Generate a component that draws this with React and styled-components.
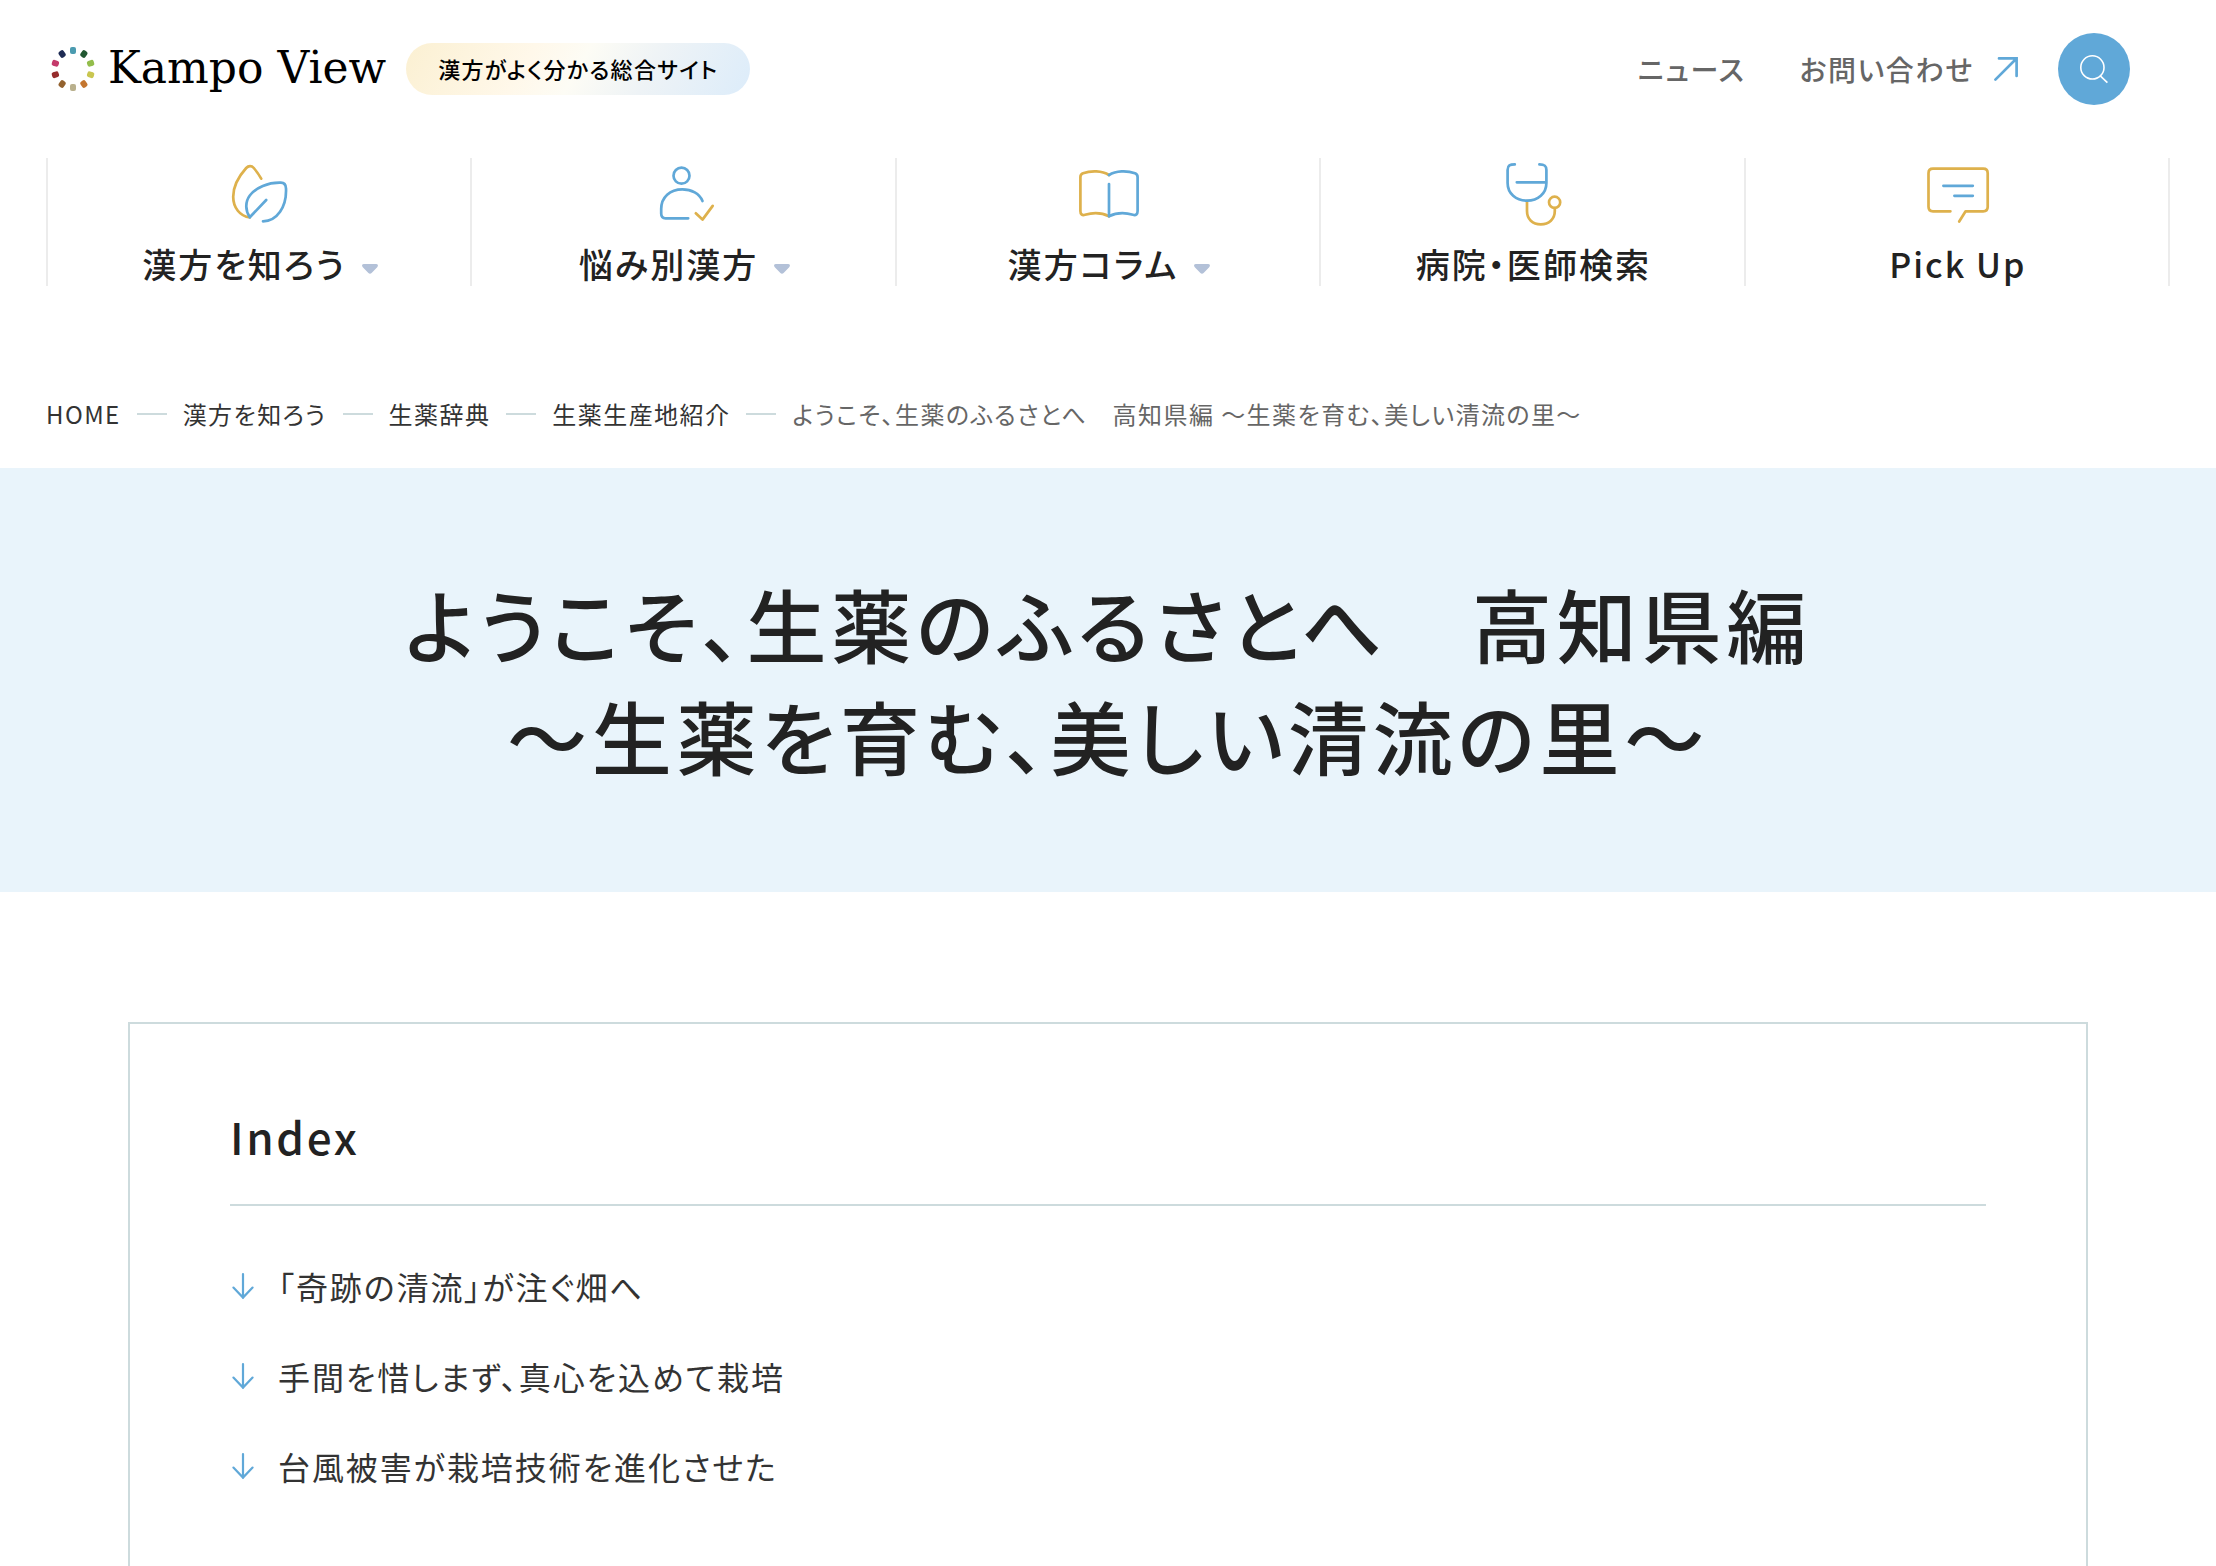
import React from 'react'
import styled, { createGlobalStyle } from 'styled-components';

const GlobalStyle = createGlobalStyle`
    * {
        box-sizing: border-box;
        letter-spacing: 0.06em;
    }
    body {
        margin: 0;
        background-color: #fff;
        color: #222;
        font-family: "Noto Sans CJK JP", "Noto Sans", sans-serif;
        font-weight: 500;
        font-feature-settings: "palt";
    }
    a {
        color: inherit;
        text-decoration: none;
    }
    h1, h2, ul, ol, p {
        margin: 0;
        padding: 0;
    }
    ul, ol {
        list-style: none;
    }
    svg {
        display: block;
        flex: none;
        overflow: visible;
    }
`;

const TopBar = styled.div`
    display: flex;
    align-items: center;
    justify-content: space-between;
    padding: 33px 86px 0 52px;
`;

const Brand = styled.div`
    display: flex;
    align-items: center;
    gap: 20px;
`;

const Logo = styled.a`
    display: flex;
    align-items: center;
    gap: 14px;
    color: #000;
    font-family: "DejaVu Serif", serif;
    font-size: 44px;
    font-weight: 400;
    line-height: 52px;

    span {
        padding-bottom: 2px;
        letter-spacing: normal;
    }
`;

const Tagline = styled.p`
    padding: 0 32px 2px;
    border-radius: 26px;
    background: linear-gradient(120deg, #fbf0d2 0%, #fff8ea 35%, #fdfcf5 50%, #eef3f6 70%, #dcecfa 100%);
    color: #000;
    font-size: 22px;
    line-height: 50px;
`;

const Tools = styled.div`
    display: flex;
    align-items: center;
    color: #666;
    font-size: 28px;
    line-height: 40px;
`;

const ToolLink = styled.a`
    display: flex;
    align-items: center;
    gap: 20px;
    margin-right: ${props => props.$external ? '40px' : '54px'};
`;

const SearchButton = styled.button`
    display: flex;
    align-items: center;
    justify-content: center;
    width: 72px;
    height: 72px;
    padding: 0;
    border: none;
    border-radius: 50%;
    background-color: #60a8d8;
    cursor: pointer;
`;

const MainNav = styled.ul`
    display: grid;
    grid-template-columns: repeat(5, 1fr);
    margin: 53px 46px 0;
    border-left: 2px solid #ececec;
`;

const NavItem = styled.li`
    border-right: 2px solid #ececec;
`;

const NavLink = styled.a`
    display: flex;
    flex-direction: column;
    align-items: center;
    gap: 17px;
    padding: 3px 0 1px 2px;
    font-size: 34px;
    line-height: 43px;
`;

const NavLabel = styled.span`
    display: flex;
    align-items: center;
    gap: 16px;

    svg {
        margin-top: 10px;
    }
`;

const Breadcrumb = styled.ol`
    display: flex;
    align-items: center;
    margin: 110px 46px 36px;
    font-size: 24px;
    font-weight: 400;
    line-height: 36px;
    color: #333;
`;

const Crumb = styled.li`
    display: flex;
    align-items: center;
    color: ${props => props.$current ? '#666' : 'inherit'};

    &:not(:first-child)::before {
        content: '';
        width: 30px;
        height: 2px;
        margin: 0 16px;
        background-color: #cddbdd;
    }
`;

const Hero = styled.section`
    padding: 98px 46px 102px;
    background-color: #e9f4fb;
    text-align: center;
`;

const Title = styled.h1`
    font-size: 80px;
    font-weight: 500;
    line-height: 112px;
`;

const IndexBox = styled.nav`
    max-width: 1960px;
    margin: 130px auto;
    padding: 80px 100px 100px;
    border: 2px solid #cddbdd;
`;

const IndexTitle = styled.h2`
    padding-bottom: 36px;
    border-bottom: 2px solid #cddbdd;
    font-size: 44px;
    font-weight: 500;
    line-height: 64px;
`;

const IndexList = styled.ul`
    display: flex;
    flex-direction: column;
    gap: 42px;
    padding-top: 56px;
`;

const IndexLink = styled.a`
    display: flex;
    align-items: center;
    gap: 22px;
    color: #333;
    font-size: 32px;
    font-weight: 400;
    line-height: 48px;
`;

const BLUE = '#60a8d8';
const GOLD = '#deb14c';

const petals = ['#4b9bb0', '#215732', '#93bd4b', '#c9c650', '#c4762f', '#b9b08d', '#93622f', '#962d2d', '#c43a6b', '#1e2b54'];

const LogoMark = () => (
  <svg width="42" height="44" viewBox="-21 -22 42 44" aria-hidden="true">
    {petals.map((color, i) => (
      <rect key={color} x="-3" y="-22" width="6" height="7" rx="2" fill={color} transform={`rotate(${i * 36})`}/>
    ))}
  </svg>
)

const NavIcon = ({ children }) => (
  <svg width="64" height="64" viewBox="0 0 64 64" fill="none" strokeWidth="2.7" strokeLinecap="round" strokeLinejoin="round" aria-hidden="true">
    {children}
  </svg>
)

const LeafIcon = () => (
  <NavIcon>
    <path stroke={GOLD} d="M21.8 56.3C12 55.5 5.2 46.5 5.2 35.7C5.2 24.5 11 15 18.2 7C20.5 4.4 23.6 4.4 25.8 7C28.6 10.3 31 13.8 33.2 17.7"/>
    <path stroke={BLUE} d="M35 60.3C49 60.3 58.8 46 58 27.5C57.9 23.6 56.6 21.8 52.8 21.7C40 21.3 28 26.5 21.8 34.5C17 41 17.2 49.5 21.8 56.3L38.2 39"/>
  </NavIcon>
)

const PersonIcon = () => (
  <NavIcon>
    <circle stroke={BLUE} cx="28.5" cy="14.7" r="8"/>
    <path stroke={BLUE} d="M49.5 40C46.5 32.8 38.5 28.3 29.4 28.3C17 28.3 8.2 36 8.2 48V52.5C8.2 55.7 9.5 57.3 12.5 57.3H35.2"/>
    <path stroke={GOLD} d="M42.8 52.3L49.5 58.6L59.7 44.9"/>
  </NavIcon>
)

const BookIcon = () => (
  <NavIcon>
    <path stroke={GOLD} d="M32 14C25 9.6 14 9.4 6 12.3C4.2 13 3.4 14 3.4 16V50C3.4 53.2 5 54.6 8 53.8C16.5 51.4 25 51.8 32 55.4"/>
    <path stroke={BLUE} d="M32 14C39 9.6 50 9.4 58 12.3C59.8 13 60.6 14 60.6 16V50C60.6 53.2 59 54.6 56 53.8C47.5 51.4 39 51.8 32 55.4V23"/>
  </NavIcon>
)

const StethoscopeIcon = () => (
  <NavIcon>
    <path stroke={GOLD} d="M26 40V50C26 58 31.5 63.4 39.8 63.4C48 63.4 53.8 58 53.8 50V47"/>
    <circle stroke={GOLD} cx="53.6" cy="41.3" r="5.6"/>
    <path stroke={BLUE} d="M13.8 3.4C9 3.4 6.6 4.4 6.6 9V22C6.6 32.5 15 39.7 26 39.7S45.4 32.5 45.4 22V9C45.4 4.4 43 3.4 38.4 3.4M15.8 21.3H45"/>
  </NavIcon>
)

const BubbleIcon = () => (
  <NavIcon>
    <path stroke={GOLD} d="M24.4 50.3H7C4 50.3 2.5 48.8 2.5 45.8V12.2C2.5 9.2 4 7.7 7 7.7H57.2C60.2 7.7 61.7 9.2 61.7 12.2V45.8C61.7 48.8 60.2 50.3 57.2 50.3H39.6L33.2 60.5"/>
    <path stroke={BLUE} d="M17.4 24.8H46.8M28.4 34.8H46.8"/>
  </NavIcon>
)

const Caret = () => (
  <svg width="16" height="10" viewBox="0 0 16 10" aria-hidden="true">
    <path fill="#b3c1d8" d="M2 0H14C16 0 16.6 1.8 15.2 3.2L9.6 9C8.6 10.1 7.4 10.1 6.4 9L0.8 3.2C-0.6 1.8 0 0 2 0Z"/>
  </svg>
)

const ExternalArrow = () => (
  <svg width="24" height="24" viewBox="0 0 24 24" fill="none" stroke={BLUE} strokeWidth="2.7" strokeLinecap="round" aria-hidden="true">
    <path d="M5 1.4H22.6V19M22 2L1.4 22.6"/>
  </svg>
)

const SearchIcon = () => (
  <svg width="28" height="28" viewBox="0 0 28 28" fill="none" stroke="#fff" strokeWidth="1.6" aria-hidden="true">
    <circle cx="12.4" cy="12.4" r="11.6"/>
    <path d="M20 20.6L27.4 27.6"/>
  </svg>
)

const DownArrow = () => (
  <svg width="26" height="26" viewBox="0 0 26 26" fill="none" stroke={BLUE} strokeWidth="2.2" strokeLinecap="round" aria-hidden="true">
    <path d="M13 1V25M3.4 14.6L13 24.6L22.6 14.6"/>
  </svg>
)

const navItems = [
  { label: '漢方を知ろう', Icon: LeafIcon, menu: true },
  { label: '悩み別漢方', Icon: PersonIcon, menu: true },
  { label: '漢方コラム', Icon: BookIcon, menu: true },
  { label: '病院・医師検索', Icon: StethoscopeIcon },
  { label: 'Pick Up', Icon: BubbleIcon },
];

const crumbs = ['HOME', '漢方を知ろう', '生薬辞典', '生薬生産地紹介'];

const sections = [
  '「奇跡の清流」が注ぐ畑へ',
  '手間を惜しまず、真心を込めて栽培',
  '台風被害が栽培技術を進化させた',
];

const App = () => {
  return (
  <div lang="ja">
    <GlobalStyle/>
    <header>
      <TopBar>
        <Brand>
          <Logo href="#">
            <LogoMark/>
            <span>Kampo View</span>
          </Logo>
          <Tagline>漢方がよく分かる総合サイト</Tagline>
        </Brand>
        <Tools>
          <ToolLink href="#">ニュース</ToolLink>
          <ToolLink href="#" $external>お問い合わせ<ExternalArrow/></ToolLink>
          <SearchButton type="button" aria-label="検索">
            <SearchIcon/>
          </SearchButton>
        </Tools>
      </TopBar>
      <nav>
        <MainNav>
          {navItems.map(({ label, Icon, menu }) => (
            <NavItem key={label}>
              <NavLink href="#">
                <Icon/>
                <NavLabel>{label}{menu && <Caret/>}</NavLabel>
              </NavLink>
            </NavItem>
          ))}
        </MainNav>
      </nav>
    </header>
    <main>
      <Breadcrumb>
        {crumbs.map(crumb => (
          <Crumb key={crumb}><a href="#">{crumb}</a></Crumb>
        ))}
        <Crumb $current>ようこそ、生薬のふるさとへ　高知県編 ～生薬を育む、美しい清流の里～</Crumb>
      </Breadcrumb>
      <Hero>
        <Title>ようこそ、生薬のふるさとへ　高知県編<br/>～生薬を育む、美しい清流の里～</Title>
      </Hero>
      <IndexBox aria-labelledby="index-title">
        <IndexTitle id="index-title">Index</IndexTitle>
        <IndexList>
          {sections.map(section => (
            <li key={section}>
              <IndexLink href="#"><DownArrow/>{section}</IndexLink>
            </li>
          ))}
        </IndexList>
      </IndexBox>
    </main>
  </div>
  )
}

export default App;
